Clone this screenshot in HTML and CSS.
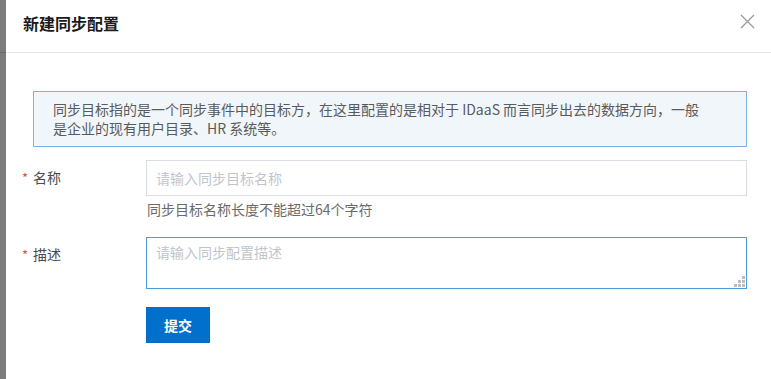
FILE: index.html
```html
<!DOCTYPE html>
<html lang="zh-CN">
<head>
<meta charset="utf-8">
<title>新建同步配置</title>
<link rel="stylesheet" href="styles.css">
</head>
<body>
<div class="backdrop"><div class="backdrop-line"></div></div>
<div class="modal">
  <div class="modal-header">
    <div class="modal-title">新建同步配置</div>
    <button class="modal-close" aria-label="关闭">
      <svg width="15" height="15" viewBox="0 0 15 15"><path d="M1 1L14 14M14 1L1 14" stroke="#9a9a9a" stroke-width="1.3" fill="none"/></svg>
    </button>
  </div>
  <div class="modal-body">
    <div class="alert">同步目标指的是一个同步事件中的目标方，在这里配置的是相对于 IDaaS 而言同步出去的数据方向，一般<br>是企业的现有用户目录、HR 系统等。</div>
    <div class="form-row">
      <label class="form-label"><span class="req">*</span>名称</label>
      <div class="form-control">
        <input class="input" type="text" placeholder="请输入同步目标名称">
        <div class="help">同步目标名称长度不能超过64个字符</div>
      </div>
    </div>
    <div class="form-row row-desc">
      <label class="form-label"><span class="req">*</span>描述</label>
      <div class="form-control">
        <div class="textarea-wrap">
          <textarea class="textarea" placeholder="请输入同步配置描述"></textarea>
          <svg class="grip" width="11" height="11" viewBox="0 0 11 11" aria-hidden="true">
            <rect x="8" y="0" width="3" height="3" fill="#bdbdbd"/>
            <rect x="4" y="4" width="3" height="3" fill="#bdbdbd"/>
            <rect x="8" y="4" width="3" height="3" fill="#bdbdbd"/>
            <rect x="0" y="8" width="3" height="3" fill="#bdbdbd"/>
            <rect x="4" y="8" width="3" height="3" fill="#bdbdbd"/>
            <rect x="8" y="8" width="3" height="3" fill="#bdbdbd"/>
          </svg>
        </div>
      </div>
    </div>
    <div class="form-row row-actions">
      <div class="form-label"></div>
      <div class="form-control">
        <button class="btn-primary">提交</button>
      </div>
    </div>
  </div>
</div>
</body>
</html>
```
FILE: styles.css
```css
html, body {
  margin: 0;
  height: 100%;
}
body {
  display: flex;
  background: #7c7c7c;
  font-family: "Noto Sans CJK SC", "Liberation Sans", sans-serif;
  font-size: 14px;
  color: #333;
  overflow: hidden;
}
.backdrop {
  width: 6px;
  flex: none;
  background: #7c7c7c;
}
.backdrop-line {
  margin-top: 52px;
  height: 1px;
  background: #6a6a6a;
}
.modal {
  flex: 1;
  background: #fff;
  display: flex;
  flex-direction: column;
}
.modal-header {
  height: 53px;
  border-bottom: 1px solid #e3e8ef;
  display: flex;
  align-items: center;
  justify-content: space-between;
  padding: 0 16px 0 17px;
  box-sizing: border-box;
}
.modal-title {
  font-size: 16px;
  font-weight: bold;
  color: #1a1a1a;
  line-height: 20px;
  margin-top: -6px;
}
.modal-close {
  border: 0;
  background: none;
  padding: 0;
  width: 15px;
  height: 15px;
  margin-top: -9px;
  display: flex;
}
.modal-body {
  padding: 38px 24px 0 16px;
}
.alert {
  margin-left: 11px;
  border: 1px solid #7fb1e3;
  background: #f1f6fb;
  color: #5a5a5a;
  font-size: 14px;
  line-height: 19px;
  padding: 8px 19px;
  margin-bottom: 13px;
}
.form-row {
  display: flex;
}
.form-label {
  width: 124px;
  flex: none;
  line-height: 34px;
  color: #4a4a4a;
  font-size: 14px;
}
.req {
  color: #e84a4a;
  margin-right: 5px;
  font-size: 13px;
}
.form-control {
  flex: 1;
  display: flex;
  flex-direction: column;
}
.input {
  height: 36px;
  box-sizing: border-box;
  border: 1px solid #d9dee6;
  padding: 0 9px;
  font-family: inherit;
  font-size: 14px;
  outline: none;
  margin: 0;
}
.input::placeholder, .textarea::placeholder {
  color: #c0c5cc;
}
.help {
  color: #6a6a6a;
  font-size: 14px;
  line-height: 20px;
  margin-top: 3px;
  padding-left: 1px;
}
.row-desc {
  margin-top: 18px;
}
.textarea-wrap {
  position: relative;
}
.textarea {
  width: 100%;
  height: 52px;
  box-sizing: border-box;
  border: 1px solid #4e9bdc;
  padding: 4px 9px;
  font-family: inherit;
  font-size: 14px;
  line-height: 20px;
  outline: none;
  margin: 0;
  resize: none;
  display: block;
}
.grip {
  position: absolute;
  right: 2px;
  bottom: 2px;
}
.row-actions {
  margin-top: 18px;
}
.btn-primary {
  width: 64px;
  height: 36px;
  border: 0;
  background: #0170cc;
  color: #fff;
  font-family: inherit;
  font-size: 14px;
  font-weight: bold;
  padding: 0;
}
```
